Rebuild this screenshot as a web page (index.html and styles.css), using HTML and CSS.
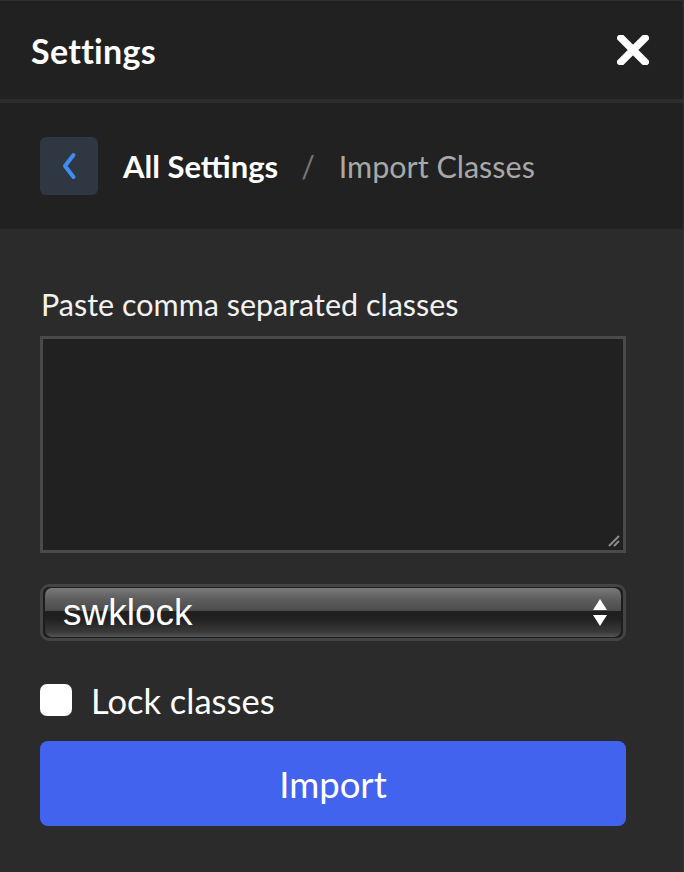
FILE: index.html
```html
<!DOCTYPE html>
<html lang="en">
<head>
<meta charset="utf-8">
<title>Settings</title>
<link rel="stylesheet" href="styles.css">
</head>
<body>
<div class="panel">
  <header class="header">
    <h1 class="title">Settings</h1>
    <button class="close" aria-label="Close">
      <svg width="32" height="30" viewBox="0 0 32 30"><path d="M4 3 L28 27 M28 3 L4 27" stroke="#fff" stroke-width="7.5" stroke-linecap="square"/></svg>
    </button>
  </header>
  <div class="sep"></div>
  <nav class="crumbs">
    <button class="back" aria-label="Back">
      <svg width="18" height="28" viewBox="0 0 18 28"><path d="M13.5 3 L5 14 L13.5 25" fill="none" stroke="#3d8ef0" stroke-width="4" stroke-linecap="round" stroke-linejoin="round"/></svg>
    </button>
    <span class="crumb-main">All Settings</span>
    <span class="crumb-sep">/</span>
    <span class="crumb-cur">Import Classes</span>
  </nav>
  <main class="body">
    <label class="label">Paste comma separated classes</label>
    <div class="textarea">
      <svg class="grip" width="14" height="14" viewBox="0 0 14 14"><path d="M2 12 L12 2 M7 12 L12 7" stroke="#8a8a8a" stroke-width="2"/></svg>
    </div>
    <div class="select">
      <div class="select-inner">
        <span class="select-text">swklock</span>
        <span class="arrows"><svg width="16" height="30" viewBox="0 0 16 30"><path d="M8 1 L15 12 L1 12 Z M1 17 L15 17 L8 28 Z" fill="#fff"/></svg></span>
      </div>
    </div>
    <div class="check-row">
      <span class="checkbox"></span>
      <span class="check-label">Lock classes</span>
    </div>
    <button class="import">Import</button>
  </main>
</div>
</body>
</html>
```
FILE: styles.css
```css
html, body {
  margin: 0;
  padding: 0;
  background: #2b2b2b;
}
body {
  font-family: "Source Sans Pro", Lato, "Noto Sans", sans-serif;
  color: #fff;
}
.panel {
  width: 684px;
  height: 872px;
  box-sizing: border-box;
  border-top: 1px solid #2f2f2f;
  border-right: 1px solid #333;
  background: #2b2b2b;
  display: flex;
  flex-direction: column;
}
.header {
  height: 98px;
  background: #212121;
  display: flex;
  align-items: center;
  justify-content: space-between;
  padding: 0 34px 0 31px;
}
.title {
  margin: 0;
  font-size: 34px;
  font-weight: 700;
  letter-spacing: 0.3px;
  color: #fff;
}
.close {
  background: none;
  border: 0;
  padding: 0;
  display: flex;
}
.sep {
  height: 4px;
  background: #2c2c2c;
}
.crumbs {
  height: 126px;
  background: #212121;
  display: flex;
  align-items: center;
  padding-left: 40px;
}
.back {
  width: 58px;
  height: 58px;
  border: 0;
  border-radius: 6px;
  background: #2f3742;
  display: flex;
  align-items: center;
  justify-content: center;
  padding: 0;
  margin-right: 25px;
}
.crumb-main {
  font-size: 31px;
  font-weight: 700;
  color: #fff;
}
.crumb-sep {
  font-size: 30px;
  color: #777;
  margin: 0 24px 0 23px;
}
.crumb-cur {
  font-size: 30.5px;
  color: #a8a8a8;
}
.body {
  display: flex;
  flex-direction: column;
  padding: 0 57px 0 40px;
}
.label {
  margin-top: 58px;
  font-size: 30.5px;
  line-height: 34px;
  color: #f2f2f2;
  padding-left: 1px;
}
.textarea {
  margin-top: 15px;
  height: 217px;
  box-sizing: border-box;
  border: 3px solid #4a4a4a;
  background: #212121;
  display: flex;
  align-items: flex-end;
  justify-content: flex-end;
}
.grip {
  margin: 0 2px 2px 0;
}
.select {
  margin-top: 31px;
  height: 57px;
  box-sizing: border-box;
  border: 3px solid #444;
  border-radius: 9px;
  background: #1d1d1d;
  padding: 1px 2px 1px 2px;
  display: flex;
}
.select-inner {
  flex: 1;
  border-radius: 7px;
  background: linear-gradient(to bottom, #7a7a7a 0%, #606060 20%, #4c4c4c 46%, #1e1e1e 48%, #222 65%, #3a3a3a 90%, #555 100%);
  display: flex;
  align-items: center;
  justify-content: space-between;
  padding: 0 13px 0 18px;
}
.select-text {
  font-family: "Liberation Sans", Arial, sans-serif;
  font-size: 37px;
  color: #fff;
}
.arrows {
  display: flex;
}
.check-row {
  margin-top: 43px;
  height: 32px;
  display: flex;
  align-items: center;
}
.checkbox {
  width: 32px;
  height: 32px;
  border-radius: 7px;
  background: #fff;
}
.check-label {
  margin-left: 19px;
  font-size: 34.5px;
  color: #fff;
}
.import {
  margin-top: 25px;
  height: 85px;
  border: 0;
  border-radius: 8px;
  background: #4263ee;
  color: #fff;
  font-family: "Source Sans Pro", Lato, "Noto Sans", sans-serif;
  font-size: 36.5px;
}
```
